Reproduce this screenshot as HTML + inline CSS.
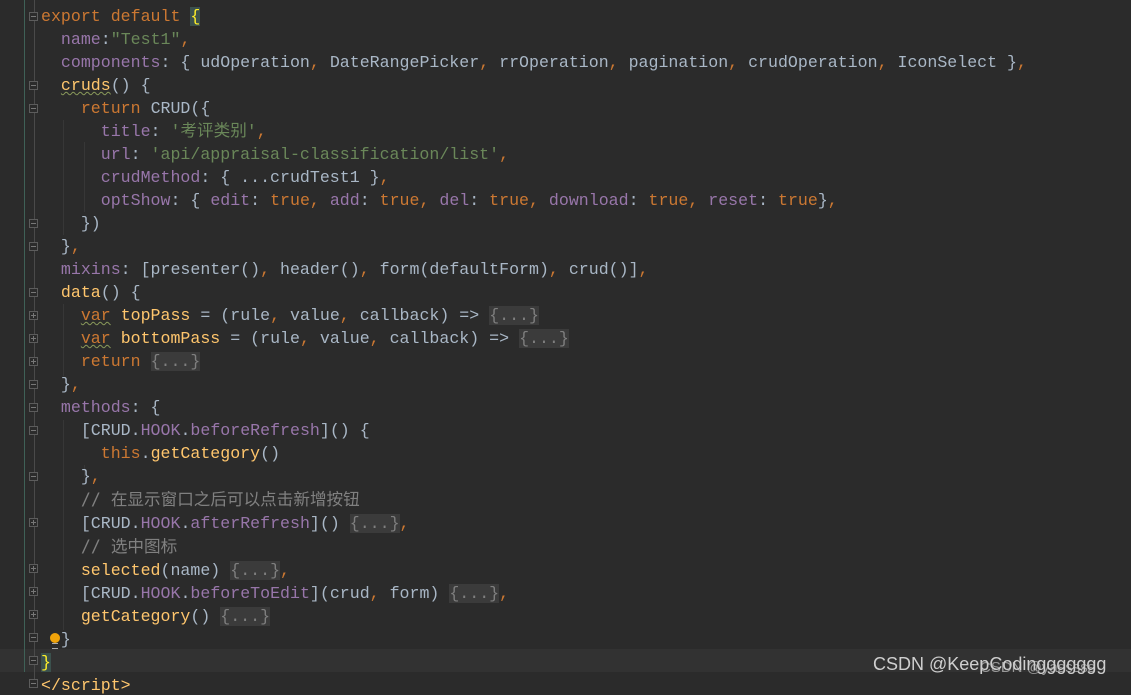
<!DOCTYPE html>
<html><head><meta charset="utf-8"><style>
body{margin:0;width:1131px;height:687px;background:#2b2b2b;overflow:hidden;position:relative;font-family:"DejaVu Sans Mono","Liberation Mono","Noto Sans CJK SC",monospace;}
.gl{position:absolute;left:24px;top:0;width:1px;height:672px;background:#3f6157;}
.fl{position:absolute;left:34px;top:0;width:1px;height:687px;background:#4a4a4a;}
.cur{position:absolute;left:0;top:649px;width:1131px;height:23px;background:#323232;}
.code{position:absolute;left:41px;top:5px;margin:0;font-size:16.6px;line-height:23px;color:#a9b7c6;white-space:pre;}
.k{color:#cc7832}.p{color:#9876aa}.s{color:#6a8759}.f{color:#ffc66d}.c{color:#808080;font-family:"DejaVu Sans Mono","Noto Sans CJK SC",monospace}
.b{background:#3b3b3b;color:#7f7f7f}
.y{color:#ffef28;background:#3b514d}
.w{text-decoration:underline wavy #8a9a5b;text-decoration-thickness:1px}
.m{position:absolute;left:29px;width:9px;height:9px;border:1px solid #5c5c5c;background:#2b2b2b;box-sizing:border-box}
.m::after{content:"";position:absolute;left:1px;top:3px;width:5px;height:1px;background:#777}
.pl::before{content:"";position:absolute;left:3px;top:1px;width:1px;height:5px;background:#777}
.ig{position:absolute;width:1px;background:#373737}
.wm{position:absolute;left:873px;top:654px;font-family:"Liberation Sans",sans-serif;font-size:18px;color:#cfcfcf;}
.wm2{position:absolute;left:980px;top:659px;font-family:"Liberation Sans",sans-serif;font-size:15px;color:#999;}
.bulb{position:absolute;left:50px;top:633px;width:10px;height:10px;border-radius:50%;background:#f0a30a}
.bulb::after{content:"";position:absolute;left:2px;top:10px;width:6px;height:4px;border-top:1px solid #aaa;border-bottom:1px solid #aaa}
</style></head><body>
<div class="cur"></div>
<div class="gl"></div><div class="fl"></div>
<div class="ig" style="left:63px;top:120px;height:115px"></div>
<div class="ig" style="left:84px;top:142px;height:70px"></div>
<div class="ig" style="left:63px;top:304px;height:72px"></div>
<div class="ig" style="left:63px;top:420px;height:210px"></div>
<div class="ig" style="left:84px;top:465px;height:12px"></div>
<div class="m" style="top:12px"></div>
<div class="m" style="top:81px"></div>
<div class="m" style="top:104px"></div>
<div class="m" style="top:219px"></div>
<div class="m" style="top:242px"></div>
<div class="m" style="top:288px"></div>
<div class="m pl" style="top:311px"></div>
<div class="m pl" style="top:334px"></div>
<div class="m pl" style="top:357px"></div>
<div class="m" style="top:380px"></div>
<div class="m" style="top:403px"></div>
<div class="m" style="top:426px"></div>
<div class="m" style="top:472px"></div>
<div class="m pl" style="top:518px"></div>
<div class="m pl" style="top:564px"></div>
<div class="m pl" style="top:587px"></div>
<div class="m pl" style="top:610px"></div>
<div class="m" style="top:633px"></div>
<div class="m" style="top:656px"></div>
<div class="m" style="top:679px"></div>
<div class="bulb"></div>
<pre class="code"><span class="k">export default </span><span class="y">{</span>
  <span class="p">name</span>:<span class="s">"Test1"</span><span class="k">,</span>
  <span class="p">components</span>: { udOperation<span class="k">,</span> DateRangePicker<span class="k">,</span> rrOperation<span class="k">,</span> pagination<span class="k">,</span> crudOperation<span class="k">,</span> IconSelect }<span class="k">,</span>
  <span class="f w">cruds</span>() {
    <span class="k">return </span>CRUD({
      <span class="p">title</span>: <span class="s">'考评类别'</span><span class="k">,</span>
      <span class="p">url</span>: <span class="s">'api/appraisal-classification/list'</span><span class="k">,</span>
      <span class="p">crudMethod</span>: { ...crudTest1 }<span class="k">,</span>
      <span class="p">optShow</span>: { <span class="p">edit</span>: <span class="k">true, </span><span class="p">add</span>: <span class="k">true, </span><span class="p">del</span>: <span class="k">true, </span><span class="p">download</span>: <span class="k">true, </span><span class="p">reset</span>: <span class="k">true</span>}<span class="k">,</span>
    })
  }<span class="k">,</span>
  <span class="p">mixins</span>: [presenter()<span class="k">,</span> header()<span class="k">,</span> form(defaultForm)<span class="k">,</span> crud()]<span class="k">,</span>
  <span class="f">data</span>() {
    <span class="k w">var</span> <span class="f">topPass</span> = (rule<span class="k">,</span> value<span class="k">,</span> callback) => <span class="b">{...}</span>
    <span class="k w">var</span> <span class="f">bottomPass</span> = (rule<span class="k">,</span> value<span class="k">,</span> callback) => <span class="b">{...}</span>
    <span class="k">return </span><span class="b">{...}</span>
  }<span class="k">,</span>
  <span class="p">methods</span>: {
    [CRUD.<span class="p">HOOK</span>.<span class="p">beforeRefresh</span>]() {
      <span class="k">this</span>.<span class="f">getCategory</span>()
    }<span class="k">,</span>
    <span class="c">// 在显示窗口之后可以点击新增按钮</span>
    [CRUD.<span class="p">HOOK</span>.<span class="p">afterRefresh</span>]() <span class="b">{...}</span><span class="k">,</span>
    <span class="c">// 选中图标</span>
    <span class="f">selected</span>(name) <span class="b">{...}</span><span class="k">,</span>
    [CRUD.<span class="p">HOOK</span>.<span class="p">beforeToEdit</span>](crud<span class="k">,</span> form) <span class="b">{...}</span><span class="k">,</span>
    <span class="f">getCategory</span>() <span class="b">{...}</span>
  }
<span class="y">}</span>
<span class="f">&lt;/script&gt;</span></pre>
<div class="wm2">CSDN @yasssss</div>
<div class="wm">CSDN @KeepCodinggggggg</div>
</body></html>
